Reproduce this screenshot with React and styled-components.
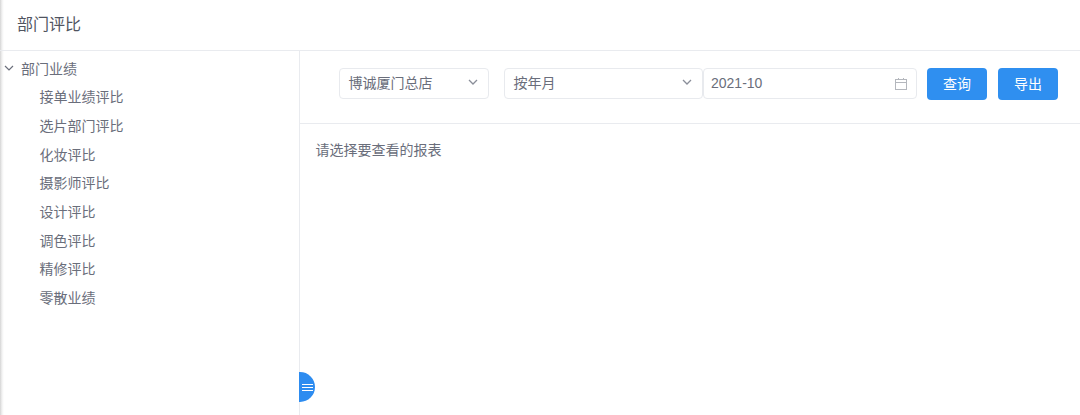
import React from 'react';
import styled, { createGlobalStyle } from 'styled-components';

const Global = createGlobalStyle`
  html, body {
    margin: 0;
    padding: 0;
    background: #fff;
  }
  body {
    font-family: "Liberation Sans", "Noto Sans CJK SC", sans-serif;
    color: #6a6e7b;
  }
`

const Page = styled.div`
  position: relative;
  width: 1080px;
  height: 415px;
  overflow: hidden;
  display: flex;
  flex-direction: column;
  background: linear-gradient(to right, #d4d4d4, #f2f2f2 2px, #fff 4px);
`

const Header = styled.header`
  height: 50px;
  flex: none;
  display: flex;
  align-items: center;
  padding-left: 17px;
  border-bottom: 1px solid #e9ebef;
  font-size: 16px;
  color: #50545f;
`

const HeaderText = styled.span`
  margin-bottom: 5px;
`

const Body = styled.div`
  flex: 1;
  display: flex;
  min-height: 0;
`

const Sidebar = styled.aside`
  width: 299px;
  flex: none;
  border-right: 1px solid #e9ebef;
  padding-top: 3px;
`

const Row = styled.div`
  height: ${p => p.$height}px;
  display: flex;
  align-items: center;
  font-size: 14px;
  color: #6a6e7b;
  padding-left: ${p => p.$indent}px;
`

const Arrow = styled.svg`
  width: 10px;
  height: 10px;
  margin-right: 7px;
  fill: none;
  stroke: #6a6e7b;
  stroke-width: 1.2;
`

const Content = styled.main`
  flex: 1;
  min-width: 0;
`

const Toolbar = styled.div`
  height: 73px;
  box-sizing: border-box;
  border-bottom: 1px solid #e9ebef;
  display: flex;
  padding: 17px 0 0 39px;
`

const Field = styled.div`
  width: ${p => p.$width}px;
  height: 31px;
  box-sizing: border-box;
  margin-right: ${p => p.$gap || 0}px;
  border: 1px solid #e8eaee;
  border-radius: 4px;
  display: flex;
  align-items: center;
  justify-content: space-between;
  padding: 0 ${p => p.$right}px ${p => p.$bottom}px ${p => p.$left}px;
  font-size: 14px;
  color: #6a6e7b;
`

const Chevron = styled.svg`
  width: 10px;
  height: 10px;
  fill: none;
  stroke: #8a8e99;
  stroke-width: 1.3;
`

const CalendarIcon = styled.svg`
  width: 14px;
  height: 14px;
  margin-top: 1px;
  fill: none;
  stroke: #b4b7bd;
  stroke-width: 1;
`

const Button = styled.button`
  width: 60px;
  height: 32px;
  margin-right: ${p => p.$gap || 0}px;
  border: 0;
  border-radius: 4px;
  background: #2f8ff0;
  color: #fff;
  font-family: inherit;
  font-size: 14px;
  padding: 0 0 3px;
`

const Notice = styled.p`
  margin: 0;
  padding: 18px 0 0 15.5px;
  font-size: 14px;
  line-height: 16px;
  color: #6a6e7b;
`

const Handle = styled.div`
  position: absolute;
  left: 299px;
  top: 372px;
  width: 16px;
  height: 30px;
  border-radius: 0 15px 15px 0;
  background: #2d8cf0;
  display: flex;
  flex-direction: column;
  align-items: center;
  justify-content: center;
  gap: 2px;
`

const HandleLine = styled.span`
  width: 11px;
  height: 1px;
  background: #fff;
`

const items = ['接单业绩评比', '选片部门评比', '化妆评比', '摄影师评比', '设计评比', '调色评比', '精修评比', '零散业绩']

const Down = ({ as: Icon = Chevron }) => (
  <Icon viewBox="0 0 10 10"><path d="M1 3l4 4 4-4" /></Icon>
)

export default function App() {
  return (
    <Page>
      <Global />
      <Header><HeaderText>部门评比</HeaderText></Header>
      <Body>
        <Sidebar>
          <Row $indent={4} $height={28}><Down as={Arrow} />部门业绩</Row>
          {items.map(item => <Row key={item} $indent={39.5} $height={28.7}>{item}</Row>)}
        </Sidebar>
        <Content>
          <Toolbar>
            <Field $width={150} $gap={15} $left={8.5} $right={10} $bottom={3}>博诚厦门总店<Down /></Field>
            <Field $width={199} $left={8.5} $right={10} $bottom={3}>按年月<Down /></Field>
            <Field $width={214} $gap={10} $left={7} $right={8} $bottom={1}>
              2021-10
              <CalendarIcon viewBox="0 0 14 14">
                <rect x="1.5" y="2.5" width="11" height="10" />
                <path d="M1.5 5.5h11M4.5 1v2M9.5 1v2" />
              </CalendarIcon>
            </Field>
            <Button $gap={11}>查询</Button>
            <Button>导出</Button>
          </Toolbar>
          <Notice>请选择要查看的报表</Notice>
        </Content>
      </Body>
      <Handle>
        <HandleLine /><HandleLine /><HandleLine />
      </Handle>
    </Page>
  );
}
